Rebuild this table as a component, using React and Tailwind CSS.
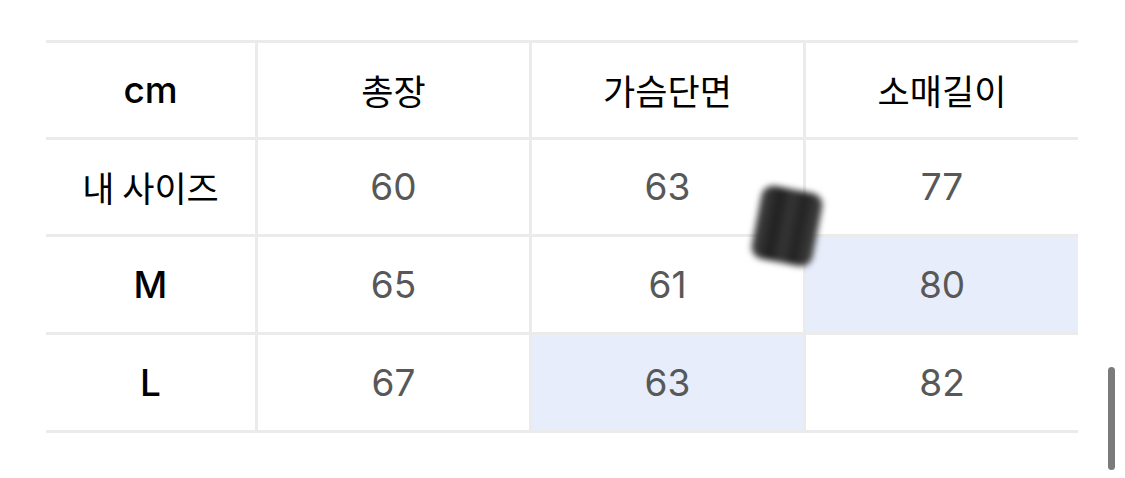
import React from "react";

const KR = { fontFamily: '"Noto Sans CJK KR", sans-serif' };
const LAT = { fontFamily: 'Inter, "Noto Sans CJK KR", sans-serif' };

function HeadK({ children }) {
  return (
    <div className="bg-white flex items-center justify-center text-[35px] font-normal text-black" style={KR}>
      {children}
    </div>
  );
}
function HeadL({ children }) {
  return (
    <div className="bg-white flex items-center justify-center text-[37px] font-medium text-black" style={LAT}>
      {children}
    </div>
  );
}
function Num({ children, hl }) {
  return (
    <div
      className={`${hl ? "bg-[#e8edfc]" : "bg-white"} flex items-center justify-center text-[37px] font-normal text-[#585858]`}
      style={LAT}
    >
      {children}
    </div>
  );
}

export default function App() {
  return (
    <div className="relative w-[1125px] h-[478px] bg-white overflow-hidden">
      <div className="pl-[46px] pt-[40px]">
        <div className="grid w-[1032px] grid-cols-[209px_271px_271px_272px] grid-rows-[94px_94px_95px_95px] gap-[3px] py-[3px] bg-[#ebebeb]">
          <HeadL>cm</HeadL>
          <HeadK>총장</HeadK>
          <HeadK>가슴단면</HeadK>
          <HeadK>소매길이</HeadK>

          <HeadK>내 사이즈</HeadK>
          <Num>60</Num>
          <Num>63</Num>
          <Num>77</Num>

          <HeadL>M</HeadL>
          <Num>65</Num>
          <Num>61</Num>
          <Num hl>80</Num>

          <HeadL>L</HeadL>
          <Num>67</Num>
          <Num hl>63</Num>
          <Num>82</Num>
        </div>
      </div>

      {/* smudge */}
      <div className="absolute left-[756px] top-[189px] w-[62px] h-[74px] rotate-[11deg] rounded-[12px] bg-[linear-gradient(90deg,#444,#1f1f1f_30%,#363636_50%,#222_70%,#444)] blur-[3px]" />

      {/* scrollbar */}
      <div className="absolute left-[1108px] top-[367px] w-[7px] h-[103px] rounded-full bg-[#7b7b7b]" />
    </div>
  );
}
